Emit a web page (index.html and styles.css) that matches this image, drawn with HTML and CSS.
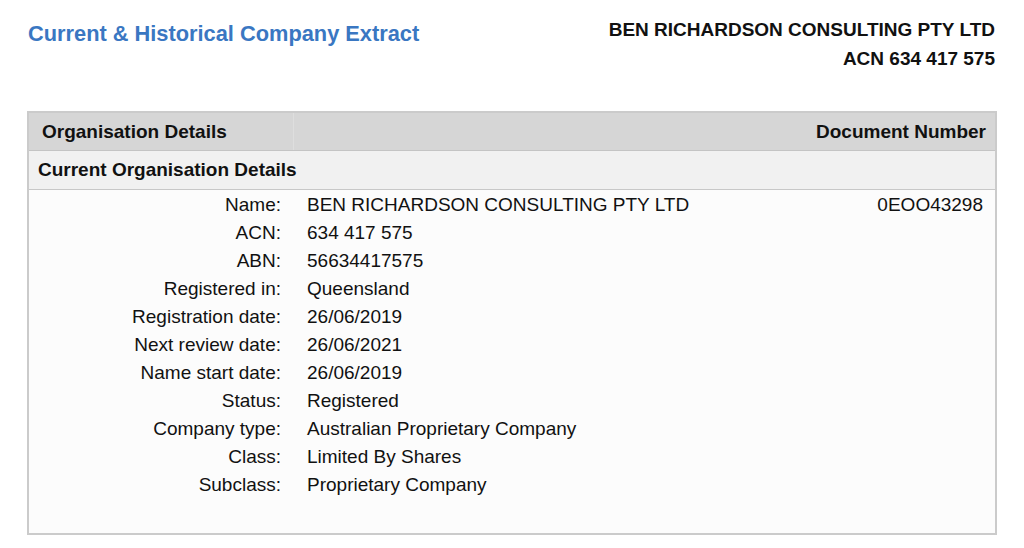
FILE: index.html
```html
<!DOCTYPE html>
<html lang="en">
<head>
<meta charset="utf-8">
<title>Current &amp; Historical Company Extract</title>
<link rel="stylesheet" href="styles.css">
</head>
<body>
<div class="page">
  <header class="top">
    <h1 class="title">Current &amp; Historical Company Extract</h1>
    <div class="company">
      <div>BEN RICHARDSON CONSULTING PTY LTD</div>
      <div>ACN 634 417 575</div>
    </div>
  </header>

  <section class="panel">
    <div class="head-row">
      <div class="head-cell head-left">Organisation Details</div>
      <div class="head-cell head-right">Document Number</div>
    </div>
    <div class="sub-row">Current Organisation Details</div>
    <div class="details">
      <div class="row"><span class="label">Name:</span><span class="value">BEN RICHARDSON CONSULTING PTY LTD</span><span class="doc">0EOO43298</span></div>
      <div class="row"><span class="label">ACN:</span><span class="value">634 417 575</span><span class="doc"></span></div>
      <div class="row"><span class="label">ABN:</span><span class="value">56634417575</span><span class="doc"></span></div>
      <div class="row"><span class="label">Registered in:</span><span class="value">Queensland</span><span class="doc"></span></div>
      <div class="row"><span class="label">Registration date:</span><span class="value">26/06/2019</span><span class="doc"></span></div>
      <div class="row"><span class="label">Next review date:</span><span class="value">26/06/2021</span><span class="doc"></span></div>
      <div class="row"><span class="label">Name start date:</span><span class="value">26/06/2019</span><span class="doc"></span></div>
      <div class="row"><span class="label">Status:</span><span class="value">Registered</span><span class="doc"></span></div>
      <div class="row"><span class="label">Company type:</span><span class="value">Australian Proprietary Company</span><span class="doc"></span></div>
      <div class="row"><span class="label">Class:</span><span class="value">Limited By Shares</span><span class="doc"></span></div>
      <div class="row"><span class="label">Subclass:</span><span class="value">Proprietary Company</span><span class="doc"></span></div>
    </div>
  </section>
</div>
</body>
</html>
```

FILE: styles.css
```css
* {
  box-sizing: border-box;
}

html, body {
  margin: 0;
  padding: 0;
  background: #ffffff;
}

body {
  font-family: "Liberation Sans", Arial, Helvetica, sans-serif;
  color: #111111;
  font-size: 19px;
}

.page {
  padding: 15px 27px 0 27px;
}

.top {
  display: flex;
  justify-content: space-between;
  align-items: flex-start;
}

.title {
  margin: 4px 0 0 1px;
  font-size: 21.8px;
  line-height: 29px;
  font-weight: bold;
  color: #3a77c2;
}

.company {
  text-align: right;
  font-weight: bold;
  line-height: 29px;
  padding-right: 2px;
  color: #111111;
}

.panel {
  margin-top: 38px;
  border: 2px solid #cbcbcb;
  background: #fcfcfc;
}

.head-row {
  display: flex;
  background: #d6d6d6;
  border-bottom: 1px solid #c4c4c4;
  font-weight: bold;
  line-height: 37px;
}

.head-left {
  width: 265px;
  padding-left: 13px;
  border-right: 1px solid #dedede;
}

.head-right {
  flex: 1;
  text-align: right;
  padding-right: 9px;
}

.sub-row {
  background: #f1f1f1;
  border-bottom: 1px solid #c8c8c8;
  font-weight: bold;
  line-height: 38px;
  padding-left: 9px;
}

.details {
  padding: 1px 12px 34px 0;
}

.row {
  display: grid;
  grid-template-columns: 252px 1fr auto;
  column-gap: 26px;
  line-height: 28px;
}

.label {
  text-align: right;
}

.doc {
  text-align: right;
}
```
